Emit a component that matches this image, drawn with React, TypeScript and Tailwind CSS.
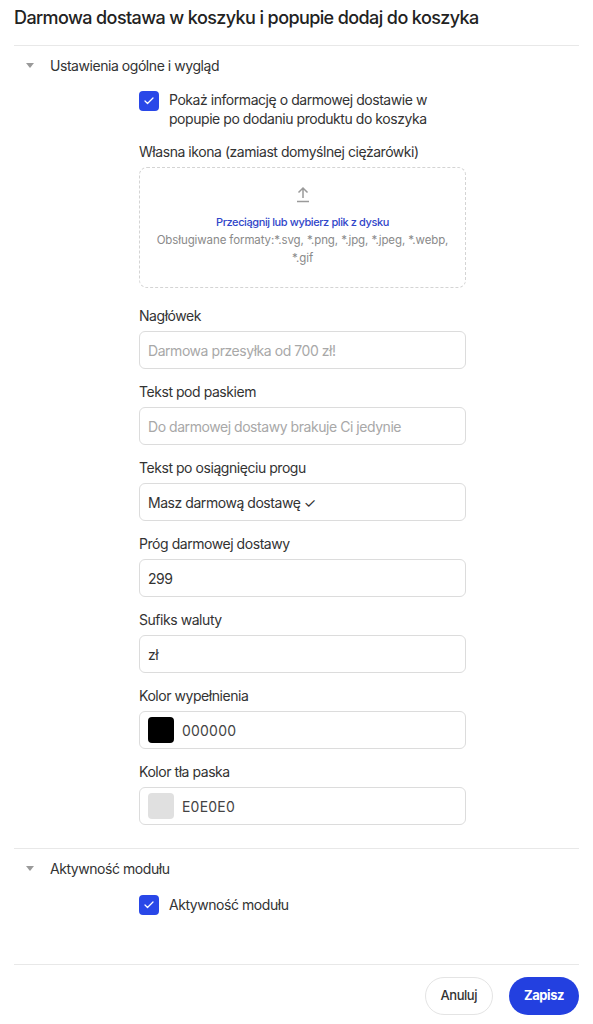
import { Check } from "lucide-react"

const FONT = "font-['Inter','Noto_Sans',sans-serif]"

const FIELDS = [
  { label: "Nagłówek", value: "", placeholder: "Darmowa przesyłka od 700 zł!" },
  { label: "Tekst pod paskiem", value: "", placeholder: "Do darmowej dostawy brakuje Ci jedynie" },
  { label: "Tekst po osiągnięciu progu", value: "Masz darmową dostawę ✓" },
  { label: "Próg darmowej dostawy", value: "299" },
  { label: "Sufiks waluty", value: "zł" },
]

const COLORS = [
  { label: "Kolor wypełnienia", value: "000000", swatch: "bg-black" },
  { label: "Kolor tła paska", value: "E0E0E0", swatch: "bg-[#e0e0e0]" },
]

function Caret() {
  return <span className="w-0 h-0 border-l-[4px] border-r-[4px] border-t-[5px] border-l-transparent border-r-transparent border-t-[#9a9a9a]" />
}

function Box() {
  return (
    <span className="grid h-5 w-5 shrink-0 place-items-center rounded-[4px] bg-[#2947e8]">
      <Check className="h-3 w-3 text-white" strokeWidth={2.5} />
    </span>
  )
}

function SectionHead({ title }: { title: string }) {
  return (
    <div className="flex items-center gap-[16px] pl-[12px] h-[20px]">
      <Caret />
      <span className="text-[14px] text-[#333]">{title}</span>
    </div>
  )
}

export default function App() {
  return (
    <div className={`${FONT} w-[593px] min-h-[1024px] bg-white text-[#222] px-[14px] pt-[6px] tracking-[-0.45px]`}>
      <h1 className="text-[18px] leading-[24px] font-medium tracking-[-0.6px] text-[#222]">
        Darmowa dostawa w koszyku i popupie dodaj do koszyka
      </h1>
      <div className="mt-[15px] border-t border-[#e8e8e8]" />

      <div className="pt-[9px]">
        <SectionHead title="Ustawienia ogólne i wygląd" />
        <div className="ml-[125px] w-[327px] pt-[16px]">
          <label className="flex items-start gap-[10px]">
            <Box />
            <span className="text-[14px] leading-[19px] text-[#333] -mt-[1px]">
              Pokaż informację o darmowej dostawie w popupie po dodaniu produktu do koszyka
            </span>
          </label>

          <div className="mt-[14px] text-[14px] leading-[20px] text-[#333]">Własna ikona (zamiast domyślnej ciężarówki)</div>
          <div className="mt-[5px] h-[121px] rounded-lg border border-dashed border-[#d4d4d4] flex flex-col items-center pt-[17px] px-[10px]">
            <svg width="16" height="18" viewBox="0 0 16 18" fill="none" stroke="#9a9a9a" strokeWidth="1.5">
              <path d="M8 13V3M3.5 7.5L8 3l4.5 4.5M2 16.5h12" />
            </svg>
            <div className="mt-[10px] text-[11px] leading-[18px] font-medium tracking-[-0.4px] text-[#3046c9]">Przeciągnij lub wybierz plik z dysku</div>
            <div className="text-[11.5px] leading-[18px] tracking-[-0.1px] text-[#8a8a8a] text-center">
              Obsługiwane formaty:*.svg, *.png, *.jpg, *.jpeg, *.webp, *.gif
            </div>
          </div>

          <div className="mt-[18px] flex flex-col">
            {FIELDS.map(f => (
              <div key={f.label} className="mb-[13px]">
                <div className="text-[14px] leading-[20px] text-[#333]">{f.label}</div>
                <input
                  readOnly
                  value={f.value}
                  placeholder={f.placeholder}
                  className="mt-[5px] w-full h-[38px] rounded-md border border-[#dcdcdc] px-[8px] text-[14px] text-[#333] placeholder:text-[#a8a8a8] outline-none tracking-[-0.45px]"
                />
              </div>
            ))}
            {COLORS.map(c => (
              <div key={c.label} className="mb-[13px]">
                <div className="text-[14px] leading-[20px] text-[#333]">{c.label}</div>
                <div className="mt-[5px] flex items-center gap-[8px] h-[38px] rounded-md border border-[#dcdcdc] px-[8px]">
                  <span className={`h-[26px] w-[26px] rounded-[4px] ${c.swatch}`} />
                  <span className="text-[14px] text-[#444] tracking-[0.2px]">{c.value}</span>
                </div>
              </div>
            ))}
          </div>
        </div>
      </div>

      <div className="mt-[10px] border-t border-[#e8e8e8]" />
      <div className="pt-[9px]">
        <SectionHead title="Aktywność modułu" />
        <div className="ml-[125px] pt-[16px]">
          <label className="flex items-center gap-[10px]">
            <Box />
            <span className="text-[14px] text-[#333]">Aktywność modułu</span>
          </label>
        </div>
      </div>

      <div className="mt-[49px] border-t border-[#e8e8e8]" />
      <div className="flex justify-end gap-[16px] pt-[12px]">
        <button className="h-[38px] px-[15px] rounded-full border border-[#e4e4e4] bg-white text-[13px] font-medium text-[#333]">Anuluj</button>
        <button className="h-[38px] px-[15px] rounded-full bg-[#2340e0] text-[13px] font-bold text-white">Zapisz</button>
      </div>
    </div>
  )
}
